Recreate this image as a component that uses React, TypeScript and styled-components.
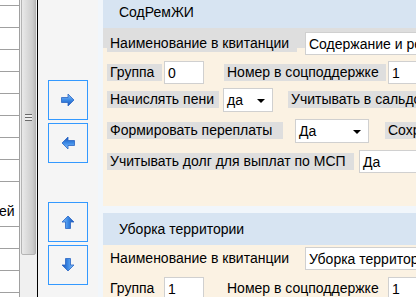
import React from "react";
import styled, { createGlobalStyle } from "styled-components";

const GlobalStyle = createGlobalStyle`
  html, body {
    margin: 0;
    padding: 0;
    background: #ffffff;
  }
  body {
    font-family: "Liberation Sans", Arial, sans-serif;
    font-size: 14px;
    color: #000;
  }
`;

type Dir = "right" | "left" | "up" | "down";

function Arrow({ dir }: { dir: Dir }) {
  const rot = { right: 0, left: 180, up: 270, down: 90 }[dir];
  const id = `g-${dir}`;
  return (
    <svg width="14" height="14" viewBox="0 0 14 14">
      <defs>
        <linearGradient id={id} x1="0" y1="0" x2="0" y2="1">
          <stop offset="0" stopColor="#8cc4fa" />
          <stop offset="0.5" stopColor="#3c8ae6" />
          <stop offset="1" stopColor="#1a52b4" />
        </linearGradient>
      </defs>
      <g transform={`rotate(${rot} 7 7)`}>
        <path
          d="M0.5 4.5 H7 V1 L13 7 L7 13 V9.5 H0.5 Z"
          fill={`url(#${id})`}
          stroke="#2a64c4"
          strokeWidth="0.8"
        />
      </g>
    </svg>
  );
}

// heights of the visible grid rows (scrolled, the first one is cut)
const gridRows = [6, 22, 22, 22, 22, 22, 22, 22, 22, 45, 22, 22, 22];

export default function App() {
  return (
    <>
      <GlobalStyle />
      <Screen>
        <Grid>
          {gridRows.map((h, i) => (
            <GridRow key={i} $h={h}>
              {i === 9 ? <CellText>ей</CellText> : null}
            </GridRow>
          ))}
        </Grid>
        <ScrollTrack>
          <Thumb>
            <Grip />
          </Thumb>
        </ScrollTrack>
        <Splitter />
        <ButtonPane>
          <ButtonGroup>
            <MoveButton>
              <Arrow dir="right" />
            </MoveButton>
            <MoveButton>
              <Arrow dir="left" />
            </MoveButton>
          </ButtonGroup>
          <ButtonGroup>
            <MoveButton>
              <Arrow dir="up" />
            </MoveButton>
            <MoveButton>
              <Arrow dir="down" />
            </MoveButton>
          </ButtonGroup>
        </ButtonPane>
        <EditorPane>
          <Scroller>
            <Section>
              <SectionHeader>СодРемЖИ</SectionHeader>
              <SectionBody>
                <Row $top={0} $band>
                  <Label $filled $w={190}>Наименование в квитанции</Label>
                  <Field $w={130} $ml={8}>Содержание и ре</Field>
                </Row>
                <Row $top={6}>
                  <Label $filled $w={55}>Группа</Label>
                  <Field $w={40} $ml={2}>0</Field>
                  <Label $filled $w={162} $ml={20}>Номер в соцподдержке</Label>
                  <Field $w={40} $ml={2}>1</Field>
                </Row>
                <Row $top={4}>
                  <Label $filled $w={112}>Начислять пени</Label>
                  <Select $w={50} $ml={4}>да</Select>
                  <Label $filled $w={140} $ml={15}>Учитывать в сальдо</Label>
                </Row>
                <Row $top={8}>
                  <Label $filled $w={176}>Формировать переплаты</Label>
                  <Select $w={74} $ml={12}>Да</Select>
                  <Label $filled $w={60} $ml={16}>Сохранять</Label>
                </Row>
                <Row $top={8}>
                  <Label $filled $w={247}>Учитывать долг для выплат по МСП</Label>
                  <Field $w={80} $ml={5}>Да</Field>
                </Row>
              </SectionBody>
            </Section>
            <Section>
              <SectionHeader>Уборка территории</SectionHeader>
              <SectionBody>
                <Row $top={2}>
                  <Label $w={190}>Наименование в квитанции</Label>
                  <Field $w={130} $ml={8}>Уборка территории</Field>
                </Row>
                <Row $top={7}>
                  <Label $w={55}>Группа</Label>
                  <Field $w={40} $ml={2}>1</Field>
                  <Label $w={162} $ml={20}>Номер в соцподдержке</Label>
                  <Field $w={40} $ml={2}>1</Field>
                </Row>
              </SectionBody>
            </Section>
          </Scroller>
        </EditorPane>
      </Screen>
    </>
  );
}

const Screen = styled.div`
  display: flex;
  width: 416px;
  height: 297px;
  overflow: hidden;
  background: #ffffff;
`;

const Grid = styled.div`
  width: 19px;
  flex: none;
  border-right: 1px solid #a0a0a0;
  background: #ffffff;
  display: flex;
  flex-direction: column;
`;

const GridRow = styled.div<{ $h: number }>`
  height: ${(p) => p.$h - 1}px;
  flex: none;
  border-bottom: 1px solid #a0a0a0;
  display: flex;
  align-items: center;
  overflow: hidden;
`;

const CellText = styled.span`
  font-size: 14px;
  margin-left: -1px;
  padding-top: 14px;
`;

const ScrollTrack = styled.div`
  width: 17px;
  flex: none;
  background: #f0f0f0;
  padding: 0 1px 0 1px;
  box-sizing: border-box;
`;

const Thumb = styled.div`
  margin-top: -4px;
  height: 257px;
  border: 1px solid #b4b4b4;
  border-radius: 0 0 2px 2px;
  background: linear-gradient(to right, #e9e9e9 0%, #dedede 30%, #cdcdcd 80%, #bcbcbc 100%);
  display: flex;
  align-items: center;
  justify-content: center;
`;

const Grip = styled.div`
  width: 7px;
  height: 7px;
  margin-top: -16px;
  background: repeating-linear-gradient(
    to bottom,
    #6a6a6a 0px,
    #6a6a6a 1px,
    #eeeeee 1px,
    #eeeeee 3px
  );
`;

const Splitter = styled.div`
  width: 1px;
  flex: none;
  background: #000000;
`;

const ButtonPane = styled.div`
  width: 60px;
  flex: none;
  background: #f5f5f5;
  display: flex;
  flex-direction: column;
  align-items: flex-start;
  padding: 80px 0 0 10px;
  box-sizing: border-box;
  gap: 39px;
`;

const ButtonGroup = styled.div`
  display: flex;
  flex-direction: column;
  gap: 3px;
`;

const MoveButton = styled.div`
  width: 40px;
  height: 40px;
  box-sizing: border-box;
  border: 1px solid #3399ff;
  background: #f5f5f5;
  display: flex;
  align-items: center;
  justify-content: center;
`;

const EditorPane = styled.div`
  flex: 1;
  min-width: 0;
  background: #f1f6fb;
  padding-left: 5px;
  overflow: hidden;
`;

// the editor is scrolled a few pixels down
const Scroller = styled.div`
  margin-top: -4px;
  display: flex;
  flex-direction: column;
  gap: 7px;
  width: 460px;
`;

const Section = styled.div`
  display: flex;
  flex-direction: column;
`;

const SectionHeader = styled.div`
  height: 32px;
  background: #d7e4f2;
  display: flex;
  align-items: center;
  padding-left: 16px;
  font-size: 14px;
`;

const SectionBody = styled.div`
  background: #fbf2e3;
  min-height: 178px;
  display: flex;
  flex-direction: column;
`;

const Row = styled.div<{ $top: number; $band?: boolean }>`
  display: flex;
  align-items: center;
  height: 23px;
  margin-top: ${(p) => p.$top}px;
  padding-top: ${(p) => (p.$band ? 4 : 0)}px;
  padding-left: 4px;
  background: ${(p) =>
    p.$band ? "linear-gradient(to bottom, #dedede 0, #dedede 20px, transparent 20px)" : "transparent"};
`;

const Label = styled.div<{ $w: number; $ml?: number; $filled?: boolean }>`
  flex: none;
  width: ${(p) => p.$w}px;
  margin-left: ${(p) => p.$ml ?? 0}px;
  height: 17px;
  line-height: 17px;
  padding-left: 3px;
  box-sizing: border-box;
  background: ${(p) => (p.$filled ? "#dedede" : "transparent")};
  white-space: nowrap;
  overflow: hidden;
`;

const Field = styled.div<{ $w: number; $ml?: number }>`
  flex: none;
  width: ${(p) => p.$w}px;
  margin-left: ${(p) => p.$ml ?? 0}px;
  height: 23px;
  box-sizing: border-box;
  border: 1px solid #d0d0d0;
  background: #ffffff;
  padding: 2px 3px 0;
  line-height: 18px;
  white-space: nowrap;
  overflow: hidden;
`;

const Select = styled(Field)`
  position: relative;
  height: 24px;
  &::after {
    content: "";
    position: absolute;
    right: 7px;
    top: 10px;
    border-left: 4px solid transparent;
    border-right: 4px solid transparent;
    border-top: 4px solid #000;
  }
`;
